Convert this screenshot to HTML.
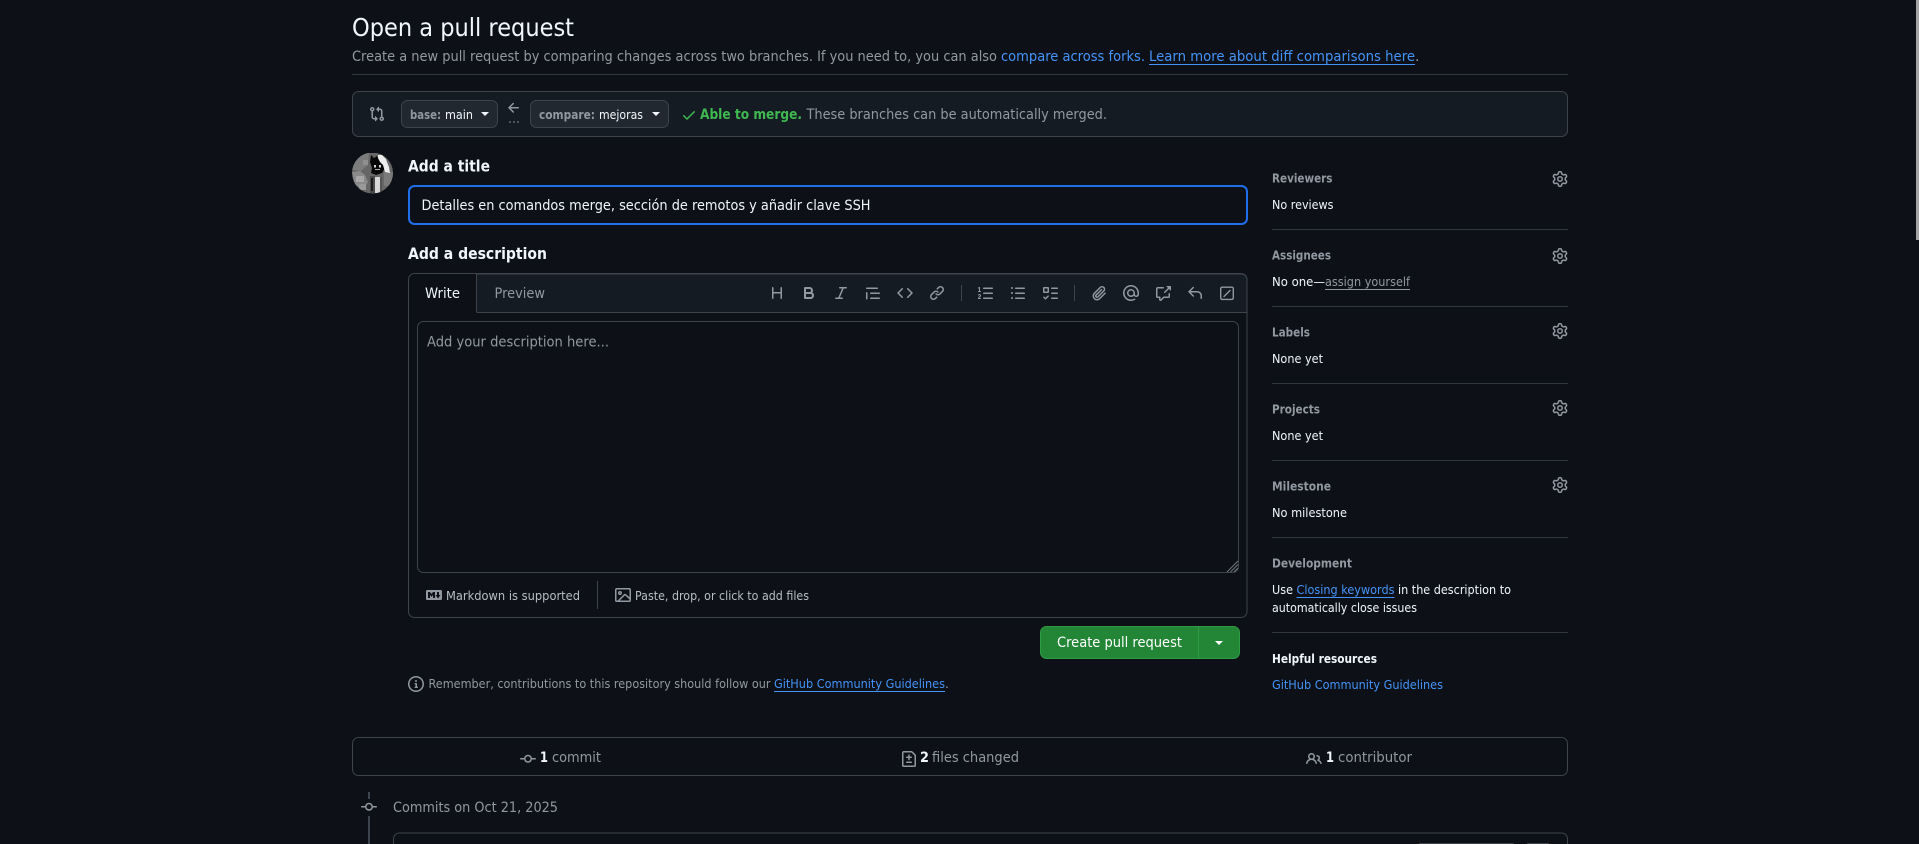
<!DOCTYPE html>
<html lang="en"><head><meta charset="utf-8"><title>Open a pull request</title>
<style>
html,body{margin:0;padding:0;background:#0d1117;width:1919px;height:844px;overflow:hidden}
svg{display:block}
text{font-family:"DejaVu Sans","Liberation Sans",sans-serif;font-size:12.300px;fill:#f0f6fc;white-space:pre}
.m{fill:#9198a1}.b{font-weight:700}.l{fill:#4493f8}
.s14{font-size:14px}.s16{font-size:16px}
.ic{fill:#9198a1}
</style></head><body>
<svg width="1919" height="844" viewBox="0 0 1919 844" xmlns="http://www.w3.org/2000/svg">
<defs>
<symbol id="gear" viewBox="0 0 16 16"><path d="M8 0a8.2 8.2 0 0 1 .701.031C9.444.095 9.99.645 10.16 1.29l.288 1.107c.018.066.079.158.212.224.231.114.454.243.668.386.123.082.233.09.299.071l1.103-.303c.644-.176 1.392.021 1.82.63.27.385.506.792.704 1.218.315.675.111 1.422-.364 1.891l-.814.806c-.049.048-.098.147-.088.294.016.257.016.515 0 .772-.01.147.038.246.088.294l.814.806c.475.469.679 1.216.364 1.891a7.977 7.977 0 0 1-.704 1.217c-.428.61-1.176.807-1.82.63l-1.102-.302c-.067-.019-.177-.011-.3.071a5.909 5.909 0 0 1-.668.386c-.133.066-.194.158-.211.224l-.29 1.106c-.168.646-.715 1.196-1.458 1.26a8.006 8.006 0 0 1-1.402 0c-.743-.064-1.289-.614-1.458-1.26l-.289-1.106c-.018-.066-.079-.158-.212-.224a5.738 5.738 0 0 1-.668-.386c-.123-.082-.233-.09-.299-.071l-1.103.303c-.644.176-1.392-.021-1.82-.63a8.12 8.12 0 0 1-.704-1.218c-.315-.675-.111-1.422.363-1.891l.815-.806c.05-.048.098-.147.088-.294a6.214 6.214 0 0 1 0-.772c.01-.147-.038-.246-.088-.294l-.815-.806C.635 6.045.431 5.298.746 4.623a7.92 7.92 0 0 1 .704-1.217c.428-.61 1.176-.807 1.82-.63l1.102.302c.067.019.177.011.3-.071.214-.143.437-.272.668-.386.133-.066.194-.158.211-.224l.29-1.106C6.009.645 6.556.095 7.299.03 7.53.01 7.764 0 8 0Zm-.571 1.525c-.036.003-.108.036-.137.146l-.289 1.105c-.147.561-.549.967-.998 1.189-.173.086-.34.183-.5.29-.417.278-.97.423-1.529.27l-1.103-.303c-.109-.03-.175.016-.195.045-.22.312-.412.644-.573.99-.014.031-.021.11.059.19l.815.806c.411.406.562.957.53 1.456a4.709 4.709 0 0 0 0 .582c.032.499-.119 1.05-.53 1.456l-.815.806c-.081.08-.073.159-.059.19.162.346.353.677.573.989.02.03.085.076.195.046l1.102-.303c.56-.153 1.113-.008 1.53.27.161.107.328.204.501.29.447.222.85.629.997 1.189l.289 1.105c.029.109.101.143.137.146a6.6 6.6 0 0 0 1.142 0c.036-.003.108-.036.137-.146l.289-1.105c.147-.561.549-.967.998-1.189.173-.086.34-.183.5-.29.417-.278.97-.423 1.529-.27l1.103.303c.109.029.175-.016.195-.045.22-.313.411-.644.573-.99.014-.031.021-.11-.059-.19l-.815-.806c-.411-.406-.562-.957-.53-1.456a4.709 4.709 0 0 0 0-.582c-.032-.499.119-1.05.53-1.456l.815-.806c.081-.08.073-.159.059-.19a6.464 6.464 0 0 0-.573-.989c-.02-.03-.085-.076-.195-.046l-1.102.303c-.56.153-1.113.008-1.53-.27a4.44 4.44 0 0 0-.501-.29c-.447-.222-.85-.629-.997-1.189l-.289-1.105c-.029-.11-.101-.143-.137-.146a6.6 6.6 0 0 0-1.142 0ZM11 8a3 3 0 1 1-6 0 3 3 0 0 1 6 0ZM9.5 8a1.5 1.5 0 1 0-3.001.001A1.5 1.5 0 0 0 9.5 8Z"/></symbol>
<symbol id="commit" viewBox="0 0 16 16"><path d="M11.93 8.5a4.002 4.002 0 0 1-7.86 0H.75a.75.75 0 0 1 0-1.5h3.32a4.002 4.002 0 0 1 7.86 0h3.32a.75.75 0 0 1 0 1.5Zm-1.43-.75a2.5 2.5 0 1 0-5 0 2.5 2.5 0 0 0 5 0Z"/></symbol>
</defs>

<rect width="1919" height="844" fill="#0d1117"/>
<rect x="1916" y="0" width="3" height="240" fill="#a3a3a3"/>

<!-- header -->
<text x="352" y="36" textLength="222" lengthAdjust="spacingAndGlyphs" style="font-size:24.500px">Open a pull request</text>
<text x="352" y="61" class="m s14" textLength="645" lengthAdjust="spacingAndGlyphs">Create a new pull request by comparing changes across two branches. If you need to, you can also</text>
<text x="1001" y="61" class="l s14" textLength="144" lengthAdjust="spacingAndGlyphs">compare across forks.</text>
<text x="1149" y="61" class="l s14" textLength="266" lengthAdjust="spacingAndGlyphs">Learn more about diff comparisons here</text>
<rect x="1149" y="64" width="266" height="1" fill="#4493f8"/>
<text x="1415" y="61" class="m s14">.</text>
<rect x="352" y="74" width="1216" height="1" fill="#3d444d" opacity=".75"/>

<!-- compare bar -->
<rect x="352.500" y="91.500" width="1215" height="45" rx="6" fill="#151b23" stroke="#3d444d"/>
<svg x="369" y="106" width="16" height="16" viewBox="0 0 16 16" class="ic"><path d="M9.573.677A.25.25 0 0 1 10 .854V2.5h1A2.5 2.5 0 0 1 13.5 5v5.628a2.251 2.251 0 1 1-1.5 0V5a1 1 0 0 0-1-1h-1v1.646a.25.25 0 0 1-.427.177L7.177 3.427a.25.25 0 0 1 0-.354ZM6 12v-1.646a.25.25 0 0 1 .427-.177l2.396 2.396a.25.25 0 0 1 0 .354l-2.396 2.396A.25.25 0 0 1 6 15.146V13.5H5A2.5 2.5 0 0 1 2.5 11V5.372a2.25 2.25 0 1 1 1.5 0V11a1 1 0 0 0 1 1ZM4 3.25a.75.75 0 1 0-1.5 0 .75.75 0 0 0 1.5 0ZM12.75 12a.75.75 0 1 0 0 1.5.75.75 0 0 0 0-1.5Z"/></svg>
<rect x="401.500" y="100.500" width="96" height="27" rx="6" fill="#212830" stroke="#3d444d"/>
<text x="410" y="119" class="m b" textLength="31" lengthAdjust="spacingAndGlyphs">base:</text>
<text x="445" y="119" textLength="28" lengthAdjust="spacingAndGlyphs">main</text>
<path d="M481 112h8l-4 4z" fill="#f0f6fc"/>
<svg x="506" y="100" width="16" height="16" viewBox="0 0 16 16" class="ic"><path d="M7.78 12.53a.75.75 0 0 1-1.06 0L2.47 8.28a.75.75 0 0 1 0-1.06l4.25-4.25a.751.751 0 0 1 1.042.018.751.751 0 0 1 .018 1.042L4.81 7h7.44a.75.75 0 0 1 0 1.5H4.81l2.97 2.97a.75.75 0 0 1 0 1.06Z"/></svg>
<circle cx="510" cy="122" r=".8" fill="#9198a1"/><circle cx="514" cy="122" r=".8" fill="#9198a1"/><circle cx="518" cy="122" r=".8" fill="#9198a1"/>
<rect x="530.500" y="100.500" width="138" height="27" rx="6" fill="#212830" stroke="#3d444d"/>
<text x="539" y="119" class="m b" textLength="56" lengthAdjust="spacingAndGlyphs">compare:</text>
<text x="599" y="119" textLength="44" lengthAdjust="spacingAndGlyphs">mejoras</text>
<path d="M652 112h8l-4 4z" fill="#f0f6fc"/>
<svg x="681" y="107" width="16" height="16" viewBox="0 0 16 16" fill="#3fb950"><path d="M13.78 4.22a.75.75 0 0 1 0 1.06l-7.25 7.25a.75.75 0 0 1-1.06 0L2.22 9.28a.751.751 0 0 1 .018-1.042.751.751 0 0 1 1.042-.018L6 10.94l6.72-6.72a.75.75 0 0 1 1.06 0Z"/></svg>
<text x="700" y="119" class="b s14" style="fill:#3fb950" textLength="102" lengthAdjust="spacingAndGlyphs">Able to merge.</text>
<text x="806.500" y="119" class="m s14" textLength="300.500" lengthAdjust="spacingAndGlyphs">These branches can be automatically merged.</text>

<!-- avatar -->
<clipPath id="av"><circle cx="372.500" cy="173" r="20.500"/></clipPath>
<g clip-path="url(#av)">
<rect x="352" y="153" width="41" height="41" fill="#666"/>
<path d="M352 160l6-7h11l-1 12-7 6-9-1z" fill="#7c7c7c"/>
<path d="M352 172l8-1 5 4 3 7-4 6-9-2z" fill="#8a8a8a"/>
<rect x="356" y="176" width="8" height="6" fill="#a8a8a8"/>
<rect x="359" y="184" width="7" height="6" fill="#999"/>
<rect x="363" y="160" width="5" height="5" fill="#8f8f8f"/>
<rect x="384" y="172" width="9" height="14" fill="#7a7a7a"/>
<rect x="370" y="176" width="5" height="17" fill="#4a4a4a"/>
<rect x="371" y="178" width="2" height="13" fill="#1a1a1a"/>
<rect x="375" y="177" width="5" height="16" fill="#d8d8d8"/>
<rect x="380" y="177" width="2" height="15" fill="#555"/>
<path d="M371 155l3 3 3-2 2 4 4 4 2 4-3 5-6 2-5-2 1-5-2-6z" fill="#070707"/>
<path d="M378 155h4l4 4 1 3 2 5 1 6-5-1-2-7-3-3-2-4z" fill="#ededed"/>
<rect x="374" y="165" width="2" height="2.500" fill="#d5d5d5"/><rect x="379" y="165" width="2" height="2.500" fill="#d5d5d5"/>
<rect x="375" y="169" width="5" height="1" fill="#aaa"/>
</g>

<!-- title -->
<text x="408" y="171.500" class="b s16" textLength="82" lengthAdjust="spacingAndGlyphs">Add a title</text>
<rect x="409" y="186" width="838" height="38" rx="5.500" fill="#0d1117" stroke="#1f6feb" stroke-width="2"/>
<text x="421.500" y="210" class="s14" textLength="449" lengthAdjust="spacingAndGlyphs">Detalles en comandos merge, sección de remotos y añadir clave SSH</text>

<!-- editor -->
<text x="408" y="259" class="b s16" textLength="139" lengthAdjust="spacingAndGlyphs">Add a description</text>
<rect x="408.500" y="273.500" width="838.500" height="344" rx="6" fill="#0d1117" stroke="#3d444d"/>
<path d="M476.500 312.500V274H1241a6 6 0 0 1 6 6v32.500z" fill="#151b23"/>
<path d="M476.500 274H1241a6 6 0 0 1 6 6v32.500H476.500" fill="none" stroke="#3d444d"/>
<path d="M476.500 273.500V312" stroke="#3d444d" fill="none"/>
<text x="425" y="298" class="s14" textLength="35" lengthAdjust="spacingAndGlyphs">Write</text>
<text x="494.500" y="298" class="m s14" textLength="50.500" lengthAdjust="spacingAndGlyphs">Preview</text>
<g class="ic">
<svg x="769" y="285" width="16" height="16" viewBox="0 0 16 16"><path d="M3.75 2a.75.75 0 0 1 .75.75V7h7V2.75a.75.75 0 0 1 1.5 0v10.5a.75.75 0 0 1-1.5 0V8.5h-7v4.75a.75.75 0 0 1-1.5 0V2.75A.75.75 0 0 1 3.75 2Z"/></svg>
<svg x="801" y="285" width="16" height="16" viewBox="0 0 16 16"><path d="M4 2h4.5a3.501 3.501 0 0 1 2.852 5.53A3.499 3.499 0 0 1 9.5 14H4a1 1 0 0 1-1-1V3a1 1 0 0 1 1-1Zm1 7v3h4.5a1.5 1.5 0 0 0 0-3Zm3.5-2a1.5 1.5 0 0 0 0-3H5v3Z"/></svg>
<svg x="833" y="285" width="16" height="16" viewBox="0 0 16 16"><path d="M6 2.75A.75.75 0 0 1 6.75 2h6.5a.75.75 0 0 1 0 1.5h-2.505l-3.858 9H9.25a.75.75 0 0 1 0 1.5h-6.5a.75.75 0 0 1 0-1.5h2.505l3.858-9H6.75A.75.75 0 0 1 6 2.75Z"/></svg>
<svg x="865" y="285" width="16" height="16" viewBox="0 0 16 16"><path d="M1.75 2.5h10.5a.75.75 0 0 1 0 1.5H1.75a.75.75 0 0 1 0-1.5Zm4 5h8.5a.75.75 0 0 1 0 1.5h-8.5a.75.75 0 0 1 0-1.5Zm0 5h8.5a.75.75 0 0 1 0 1.5h-8.5a.75.75 0 0 1 0-1.5ZM2.5 7.75v6a.75.75 0 0 1-1.5 0v-6a.75.75 0 0 1 1.5 0Z"/></svg>
<svg x="897" y="285" width="16" height="16" viewBox="0 0 16 16"><path d="m11.28 3.22 4.25 4.25a.75.75 0 0 1 0 1.06l-4.25 4.25a.749.749 0 0 1-1.275-.326.749.749 0 0 1 .215-.734L13.94 8l-3.72-3.72a.749.749 0 0 1 .326-1.275.749.749 0 0 1 .734.215Zm-6.56 0a.751.751 0 0 1 1.042.018.751.751 0 0 1 .018 1.042L2.06 8l3.72 3.72a.749.749 0 0 1-.326 1.275.749.749 0 0 1-.734-.215L.47 8.53a.75.75 0 0 1 0-1.06Z"/></svg>
<svg x="929" y="285" width="16" height="16" viewBox="0 0 16 16"><path d="m7.775 3.275 1.25-1.25a3.5 3.5 0 1 1 4.95 4.95l-2.5 2.5a3.5 3.5 0 0 1-4.95 0 .751.751 0 0 1 .018-1.042.751.751 0 0 1 1.042-.018 1.998 1.998 0 0 0 2.83 0l2.5-2.5a2.002 2.002 0 0 0-2.83-2.83l-1.25 1.25a.751.751 0 0 1-1.042-.018.751.751 0 0 1-.018-1.042Zm-4.69 9.64a1.998 1.998 0 0 0 2.83 0l1.25-1.25a.751.751 0 0 1 1.042.018.751.751 0 0 1 .018 1.042l-1.25 1.25a3.5 3.5 0 1 1-4.95-4.95l2.5-2.5a3.5 3.5 0 0 1 4.95 0 .751.751 0 0 1-.018 1.042.751.751 0 0 1-1.042.018 1.998 1.998 0 0 0-2.83 0l-2.5 2.5a1.998 1.998 0 0 0 0 2.83Z"/></svg>
<rect x="961" y="285" width="1" height="16" fill="#3d444d"/>
<svg x="978" y="285" width="16" height="16" viewBox="0 0 16 16"><path d="M5 3.25a.75.75 0 0 1 .75-.75h8.5a.75.75 0 0 1 0 1.5h-8.5A.75.75 0 0 1 5 3.25Zm0 5a.75.75 0 0 1 .75-.75h8.5a.75.75 0 0 1 0 1.5h-8.5A.75.75 0 0 1 5 8.25Zm0 5a.75.75 0 0 1 .75-.75h8.5a.75.75 0 0 1 0 1.5h-8.5a.75.75 0 0 1-.75-.75ZM.924 10.32a.5.5 0 0 1-.851-.525l.001-.001.001-.002.002-.004.007-.011c.097-.144.215-.273.348-.384.228-.19.588-.392 1.068-.392.468 0 .858.181 1.126.484.259.294.377.673.377 1.038 0 .987-.686 1.495-1.156 1.845l-.047.035c-.303.225-.522.4-.654.597h1.357a.5.5 0 0 1 0 1H.5a.5.5 0 0 1-.5-.5c0-1.005.692-1.52 1.167-1.875l.035-.025c.531-.396.8-.625.8-1.078a.57.57 0 0 0-.128-.376C1.806 10.068 1.695 10 1.5 10a.658.658 0 0 0-.429.163.835.835 0 0 0-.144.153ZM2.003 2.5V6h.503a.5.5 0 0 1 0 1H.5a.5.5 0 0 1 0-1h.503V3.308l-.28.14a.5.5 0 0 1-.446-.895l1.003-.5a.5.5 0 0 1 .723.447Z"/></svg>
<svg x="1010" y="285" width="16" height="16" viewBox="0 0 16 16"><path d="M5.75 2.5h8.5a.75.75 0 0 1 0 1.5h-8.5a.75.75 0 0 1 0-1.5Zm0 5h8.5a.75.75 0 0 1 0 1.5h-8.5a.75.75 0 0 1 0-1.5Zm0 5h8.5a.75.75 0 0 1 0 1.5h-8.5a.75.75 0 0 1 0-1.5ZM2 14a1 1 0 1 1 0-2 1 1 0 0 1 0 2Zm1-6a1 1 0 1 1-2 0 1 1 0 0 1 2 0ZM2 4a1 1 0 1 1 0-2 1 1 0 0 1 0 2Z"/></svg>
<svg x="1042" y="285" width="16" height="16" viewBox="0 0 16 16"><path d="M2 2h4a1 1 0 0 1 1 1v4a1 1 0 0 1-1 1H2a1 1 0 0 1-1-1V3a1 1 0 0 1 1-1Zm4.655 8.595a.75.75 0 0 1 0 1.06L4.03 14.28a.75.75 0 0 1-1.06 0l-1.5-1.5a.749.749 0 0 1 .326-1.275.749.749 0 0 1 .734.215l.97.97 2.095-2.095a.75.75 0 0 1 1.06 0ZM9.75 2.5h5.5a.75.75 0 0 1 0 1.5h-5.5a.75.75 0 0 1 0-1.5Zm0 5h5.5a.75.75 0 0 1 0 1.5h-5.5a.75.75 0 0 1 0-1.5Zm0 5h5.5a.75.75 0 0 1 0 1.5h-5.5a.75.75 0 0 1 0-1.5Zm-7.25-9v3h3v-3Z"/></svg>
<rect x="1074" y="285" width="1" height="16" fill="#3d444d"/>
<svg x="1091" y="285" width="16" height="16" viewBox="0 0 16 16"><path d="M12.212 3.02a1.753 1.753 0 0 0-2.478.003l-5.83 5.83a3.007 3.007 0 0 0-.88 2.127c0 .795.315 1.551.88 2.116.567.567 1.333.89 2.126.89.79 0 1.548-.321 2.116-.89l5.48-5.48a.75.75 0 0 1 1.061 1.06l-5.48 5.48a4.492 4.492 0 0 1-3.177 1.33c-1.2 0-2.345-.487-3.187-1.33a4.483 4.483 0 0 1-1.32-3.177c0-1.195.475-2.341 1.32-3.186l5.83-5.83a3.25 3.25 0 0 1 5.553 2.297c0 .863-.343 1.691-.953 2.301L7.439 12.39c-.375.377-.884.59-1.416.593a1.998 1.998 0 0 1-1.412-.593 1.992 1.992 0 0 1 0-2.828l5.48-5.48a.751.751 0 0 1 1.042.018.751.751 0 0 1 .018 1.042l-5.48 5.48a.492.492 0 0 0 0 .707.499.499 0 0 0 .352.154.51.51 0 0 0 .356-.154l5.833-5.827a1.755 1.755 0 0 0 0-2.481Z"/></svg>
<svg x="1123" y="285" width="16" height="16" viewBox="0 0 16 16"><path d="M4.75 2.37a6.501 6.501 0 0 0 6.5 11.26.75.75 0 0 1 .75 1.298A7.999 7.999 0 0 1 .989 4.148 8 8 0 0 1 16 7.75v1.5a2.75 2.75 0 0 1-5.072 1.475 3.999 3.999 0 0 1-6.65-4.19A4 4 0 0 1 12 8v1.25a1.25 1.25 0 0 0 2.5 0V7.867a6.5 6.5 0 0 0-9.75-5.496ZM10.5 8a2.5 2.5 0 1 0-5 0 2.5 2.5 0 0 0 5 0Z"/></svg>
<svg x="1155" y="285" width="16" height="16" viewBox="0 0 16 16"><path d="M2.75 3.5a.25.25 0 0 0-.25.25v7.5c0 .138.112.25.25.25h2a.75.75 0 0 1 .75.75v2.19l2.72-2.72a.749.749 0 0 1 .53-.22h4.5a.25.25 0 0 0 .25-.25v-2.5a.75.75 0 0 1 1.5 0v2.5A1.75 1.75 0 0 1 13.25 13H9.06l-2.573 2.573A1.458 1.458 0 0 1 4 14.543V13H2.75A1.75 1.75 0 0 1 1 11.25v-7.5C1 2.784 1.784 2 2.75 2h5.5a.75.75 0 0 1 0 1.5ZM16 1.25v4.146a.25.25 0 0 1-.427.177L14.03 4.03l-3.75 3.75a.749.749 0 0 1-1.275-.326.749.749 0 0 1 .215-.734l3.75-3.75-1.543-1.543A.25.25 0 0 1 11.604 1h4.146a.25.25 0 0 1 .25.25Z"/></svg>
<svg x="1187" y="285" width="16" height="16" viewBox="0 0 16 16"><path d="M6.78 1.97a.75.75 0 0 1 0 1.06L3.81 6h6.44A4.75 4.75 0 0 1 15 10.75v2.5a.75.75 0 0 1-1.5 0v-2.5a3.25 3.25 0 0 0-3.25-3.25H3.81l2.97 2.97a.749.749 0 0 1-.326 1.275.749.749 0 0 1-.734-.215L1.47 7.28a.75.75 0 0 1 0-1.06l4.25-4.25a.75.75 0 0 1 1.06 0Z"/></svg>
<rect x="1220.700" y="287.200" width="12.600" height="12.200" rx="1.500" fill="none" stroke="#9198a1" stroke-width="1.400"/>
<path d="M1230 290.500l-6 6" stroke="#9198a1" stroke-width="1.400" stroke-linecap="round" fill="none"/>
</g>
<rect x="417.500" y="321.500" width="821" height="251" rx="6" fill="#0d1117" stroke="#3d444d"/>
<text x="427" y="346.500" class="m s14" textLength="182" lengthAdjust="spacingAndGlyphs">Add your description here...</text>
<path d="M1238 561l-11 11M1238 564.500l-7.500 7.500M1238 568l-4 4" stroke="#6e7681" stroke-width="1" fill="none"/>
<svg x="426" y="587" width="16" height="16" viewBox="0 0 16 16" class="ic"><path d="M14.85 3c.63 0 1.15.52 1.14 1.15v7.7c0 .63-.51 1.15-1.15 1.15H1.15C.52 13 0 12.48 0 11.84V4.15C0 3.52.52 3 1.15 3ZM9 11V5H7L5.5 7 4 5H2v6h2V8l1.5 1.92L7 8v3Zm2.99.5L14.5 8H13V5h-2v3H9.5Z"/></svg>
<text x="446" y="600" style="fill:#b7bdc4" textLength="134" lengthAdjust="spacingAndGlyphs">Markdown is supported</text>
<rect x="597" y="581" width="1" height="28" fill="#3d444d"/>
<svg x="615" y="587" width="16" height="16" viewBox="0 0 16 16" class="ic"><path d="M16 13.25A1.75 1.75 0 0 1 14.25 15H1.75A1.75 1.75 0 0 1 0 13.25V2.75C0 1.784.784 1 1.75 1h12.5c.966 0 1.75.784 1.75 1.750ZM1.75 2.5a.25.25 0 0 0-.25.25v10.5c0 .138.112.25.25.25h.94l.03-.03 6.077-6.078a1.75 1.75 0 0 1 2.412-.06L14.5 10.31V2.75a.25.25 0 0 0-.25-.25Zm12.5 11a.25.25 0 0 0 .25-.25v-.917l-4.298-3.889a.25.25 0 0 0-.344.009L4.81 13.5ZM7 6a2 2 0 1 1-3.999.001A2 2 0 0 1 7 6ZM5.5 6a.5.5 0 1 0-1 0 .5.5 0 0 0 1 0Z"/></svg>
<text x="635" y="600" style="fill:#b7bdc4" textLength="174" lengthAdjust="spacingAndGlyphs">Paste, drop, or click to add files</text>

<!-- button -->
<rect x="1040.500" y="626.500" width="199" height="32" rx="6" fill="#238636" stroke="#2f9a44"/>
<rect x="1198" y="627" width="1" height="31" fill="#2f9a44"/>
<text x="1057" y="647" class="s14" style="fill:#fff" textLength="125" lengthAdjust="spacingAndGlyphs">Create pull request</text>
<path d="M1215 641h8l-4 4z" fill="#fff"/>

<!-- note -->
<svg x="408" y="676" width="16" height="16" viewBox="0 0 16 16" class="ic"><path d="M0 8a8 8 0 1 1 16 0A8 8 0 0 1 0 8Zm8-6.5a6.5 6.5 0 1 0 0 13 6.5 6.5 0 0 0 0-13ZM6.5 7.75A.75.75 0 0 1 7.25 7h1a.75.75 0 0 1 .75.75v2.75h.25a.75.75 0 0 1 0 1.5h-2a.75.75 0 0 1 0-1.5h.25v-2h-.25a.75.75 0 0 1-.75-.75ZM8 6a1 1 0 1 1 0-2 1 1 0 0 1 0 2Z"/></svg>
<text x="428.500" y="688" class="m" textLength="342" lengthAdjust="spacingAndGlyphs">Remember, contributions to this repository should follow our</text>
<text x="774" y="688" class="l" textLength="171" lengthAdjust="spacingAndGlyphs">GitHub Community Guidelines</text>
<rect x="774" y="691" width="171" height="1" fill="#4493f8"/>
<text x="945" y="688" class="m">.</text>

<!-- sidebar -->
<g>
<text x="1272" y="182.500" class="m b" textLength="60.500" lengthAdjust="spacingAndGlyphs">Reviewers</text>
<use href="#gear" x="1552" y="171" width="16" height="16" fill="#9198a1"/>
<text x="1272" y="209" textLength="61.500" lengthAdjust="spacingAndGlyphs">No reviews</text>
<rect x="1272" y="229" width="296" height="1" fill="#3d444d" opacity=".75"/>

<text x="1272" y="259.500" class="m b" textLength="59" lengthAdjust="spacingAndGlyphs">Assignees</text>
<use href="#gear" x="1552" y="248" width="16" height="16" fill="#9198a1"/>
<text x="1272" y="286" textLength="53" lengthAdjust="spacingAndGlyphs">No one—</text>
<text x="1325" y="286" class="m" textLength="85" lengthAdjust="spacingAndGlyphs">assign yourself</text>
<rect x="1325" y="289" width="85" height="1" fill="#9198a1"/>
<rect x="1272" y="306" width="296" height="1" fill="#3d444d" opacity=".75"/>

<text x="1272" y="336.500" class="m b" textLength="38" lengthAdjust="spacingAndGlyphs">Labels</text>
<use href="#gear" x="1552" y="323" width="16" height="16" fill="#9198a1"/>
<text x="1272" y="363" textLength="51" lengthAdjust="spacingAndGlyphs">None yet</text>
<rect x="1272" y="383" width="296" height="1" fill="#3d444d" opacity=".75"/>

<text x="1272" y="413.500" class="m b" textLength="48" lengthAdjust="spacingAndGlyphs">Projects</text>
<use href="#gear" x="1552" y="400" width="16" height="16" fill="#9198a1"/>
<text x="1272" y="440" textLength="51" lengthAdjust="spacingAndGlyphs">None yet</text>
<rect x="1272" y="460" width="296" height="1" fill="#3d444d" opacity=".75"/>

<text x="1272" y="490.500" class="m b" textLength="59" lengthAdjust="spacingAndGlyphs">Milestone</text>
<use href="#gear" x="1552" y="477" width="16" height="16" fill="#9198a1"/>
<text x="1272" y="517" textLength="75" lengthAdjust="spacingAndGlyphs">No milestone</text>
<rect x="1272" y="537" width="296" height="1" fill="#3d444d" opacity=".75"/>

<text x="1272" y="567.500" class="m b" textLength="80" lengthAdjust="spacingAndGlyphs">Development</text>
<text x="1272" y="594" textLength="21" lengthAdjust="spacingAndGlyphs">Use</text>
<text x="1296.500" y="594" class="l" textLength="98" lengthAdjust="spacingAndGlyphs">Closing keywords</text>
<rect x="1296.500" y="597" width="98" height="1" fill="#4493f8"/>
<text x="1398" y="594" textLength="113" lengthAdjust="spacingAndGlyphs">in the description to</text>
<text x="1272" y="612" textLength="145" lengthAdjust="spacingAndGlyphs">automatically close issues</text>
<rect x="1272" y="632" width="296" height="1" fill="#3d444d" opacity=".75"/>

<text x="1272" y="663" class="b" textLength="105" lengthAdjust="spacingAndGlyphs">Helpful resources</text>
<text x="1272" y="689" class="l" textLength="171" lengthAdjust="spacingAndGlyphs">GitHub Community Guidelines</text>
</g>

<!-- tabs bar -->
<rect x="352.500" y="737.500" width="1215" height="38" rx="6" fill="none" stroke="#3d444d"/>
<use href="#commit" x="520" y="751" width="16" height="16" fill="#9198a1"/>
<text x="540" y="762" class="b s14" textLength="8" lengthAdjust="spacingAndGlyphs">1</text>
<text x="552" y="762" class="m s14" textLength="49" lengthAdjust="spacingAndGlyphs">commit</text>
<svg x="901" y="751" width="16" height="16" viewBox="0 0 16 16" class="ic"><path d="M1 1.750C1 .784 1.784 0 2.750 0h7.586c.464 0 .909.184 1.237.513l2.914 2.914c.329.328.513.773.513 1.237v9.586A1.750 1.750 0 0 1 13.250 16H2.750A1.750 1.750 0 0 1 1 14.250Zm1.750-.25a.25.25 0 0 0-.25.25v12.500c0 .138.112.25.25.25h10.500a.25.25 0 0 0 .25-.25V4.664a.25.25 0 0 0-.073-.177l-2.914-2.914a.25.25 0 0 0-.177-.073ZM8 3.250a.75.75 0 0 1 .75.75v1.500h1.500a.75.75 0 0 1 0 1.500h-1.500v1.500a.75.75 0 0 1-1.500 0V7h-1.500a.75.75 0 0 1 0-1.500h1.500V4A.75.75 0 0 1 8 3.250Zm-3 8a.75.75 0 0 1 .75-.75h4.500a.75.75 0 0 1 0 1.500h-4.500a.75.75 0 0 1-.75-.75Z"/></svg>
<text x="920" y="762" class="b s14" textLength="9" lengthAdjust="spacingAndGlyphs">2</text>
<text x="932" y="762" class="m s14" textLength="87" lengthAdjust="spacingAndGlyphs">files changed</text>
<svg x="1306" y="751" width="16" height="16" viewBox="0 0 16 16" class="ic"><path d="M2 5.500a3.500 3.500 0 1 1 5.898 2.549 5.508 5.508 0 0 1 3.034 4.084.75.75 0 1 1-1.482.235 4 4 0 0 0-7.900 0 .75.75 0 0 1-1.482-.236A5.507 5.507 0 0 1 3.102 8.050 3.493 3.493 0 0 1 2 5.500ZM11 4a3.001 3.001 0 0 1 2.220 5.018 5.010 5.010 0 0 1 2.560 3.012.749.749 0 0 1-.885.954.752.752 0 0 1-.549-.514 3.507 3.507 0 0 0-2.522-2.372.75.75 0 0 1-.574-.73v-.352a.75.75 0 0 1 .416-.672A1.500 1.500 0 0 0 11 5.500.75.75 0 0 1 11 4Zm-5.500-.5a2 2 0 1 0-.001 3.999A2 2 0 0 0 5.500 3.500Z"/></svg>
<text x="1326" y="762" class="b s14" textLength="8" lengthAdjust="spacingAndGlyphs">1</text>
<text x="1338" y="762" class="m s14" textLength="74" lengthAdjust="spacingAndGlyphs">contributor</text>

<!-- timeline -->
<rect x="368" y="792" width="2" height="7" fill="#3d444d"/>
<rect x="368" y="816" width="2" height="28" fill="#3d444d"/>
<use href="#commit" x="361" y="799" width="16" height="16" fill="#9198a1"/>
<text x="393" y="812" class="m s14" textLength="165" lengthAdjust="spacingAndGlyphs">Commits on Oct 21, 2025</text>
<path d="M393.500 845V839a6 6 0 0 1 6-6H1561.500a6 6 0 0 1 6 6V845" fill="none" stroke="#3d444d"/>
<rect x="1419" y="843" width="95" height="3" rx="1" fill="#3d444d"/>
<rect x="1527" y="843" width="22" height="3" rx="1" fill="#3d444d"/>
</svg>
</body></html>
